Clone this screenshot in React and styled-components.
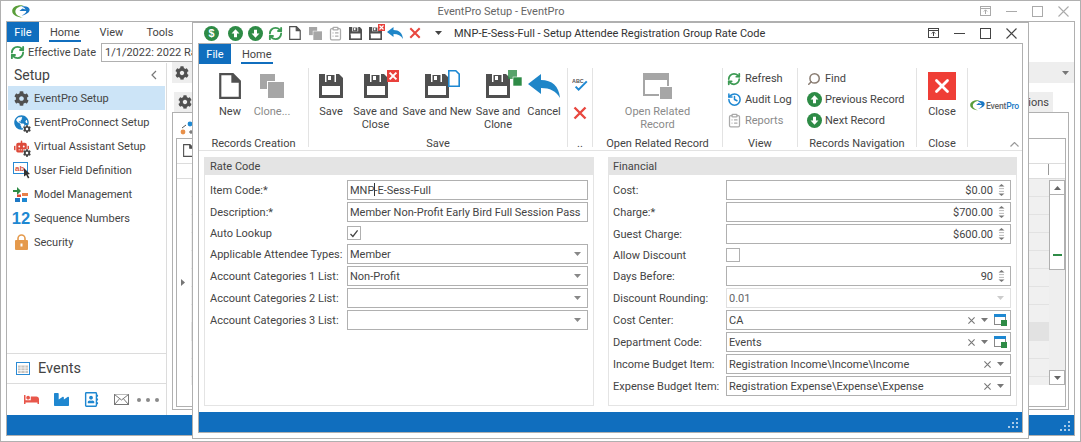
import React from 'react'
import styled, { createGlobalStyle } from 'styled-components'
import { RefreshCw, Search, History, ClipboardList, X } from 'lucide-react'
import { FaCog, FaGlobeAmericas, FaRobot, FaBed, FaIndustry, FaRegAddressBook } from 'react-icons/fa'

const BLUE = '#106ebe'
const LINE = '#b0b0b0'
const TEXT = '#444444'
const FONT = 'Roboto, "Open Sans", sans-serif'

const Global = createGlobalStyle`
  html, body { margin: 0; padding: 0; background: #fff; }
  body { font-family: ${FONT}; font-size: 11px; color: ${TEXT}; }
  * { box-sizing: border-box; }
`

/* ---------- small drawings ---------- */

const Swirl = ({ w = 18, h = 13 }) => (
  <svg width={w} height={h} viewBox="0 0 18 13">
    <path d="M12 .6C6 -.6.4 1.6.2 5.8c-.2 4 5 6.6 10.8 6.8C6 11.6 3 9 3.4 6 3.8 3.2 7.4 1.2 12 .6z" fill="#5a9e3a" />
    <path d="M9 1.6c4-1 8-.2 8.6 2.6.4 2.6-2.6 5.4-8 6.4 3-1.4 4.8-3 4.6-4.6H7.4l3-2.4 3.2 1c-.6-1.6-2.4-2.6-4.6-3z" fill="#1b78c4" />
  </svg>
)

const RoundArrow = ({ down, size = 15 }) => (
  <svg width={size} height={size} viewBox="0 0 16 16">
    <circle cx="8" cy="8" r="8" fill="#2e8b46" />
    <path d={down ? 'M8 12.6 3.8 8H6.4V4h3.2v4h2.6z' : 'M8 3.4 12.2 8H9.6v4H6.4V8H3.8z'} fill="#fff" />
  </svg>
)

const Dollar = () => (
  <svg width="15" height="15" viewBox="0 0 16 16">
    <circle cx="8" cy="8" r="8" fill="#2e8b46" />
    <text x="8" y="12" fontSize="11.5" fontWeight="700" fontFamily="Liberation Sans, sans-serif" textAnchor="middle" fill="#fff">$</text>
  </svg>
)

const DocIcon = ({ size = 26, color = '#505050' }) => (
  <svg width={size * 0.85} height={size} viewBox="0 0 22 26" fill="none">
    <path d="M1.2 1.2h12.6l7 7v16.6H1.2zM13.4 1.4v7.2h7.2" stroke={color} strokeWidth="2.2" />
    <path d="M13.6 1.6l6.8 6.8h-6.8z" fill={color} />
  </svg>
)

const CloneIcon = ({ size = 24 }) => (
  <svg width={size} height={size} viewBox="0 0 24 24">
    <rect x="0" y="0" width="15" height="15" fill="#a6a6a6" />
    <rect x="7" y="7" width="17" height="17" fill="#fff" />
    <rect x="8" y="8" width="16" height="16" fill="#a6a6a6" />
  </svg>
)

const FloppyShape = ({ size = 24 }) => (
  <svg width={size} height={size} viewBox="0 0 24 24">
    <path d="M0 0h20l4 4v20H0z" fill="#4f4f4f" />
    <rect x="6" y="0" width="11" height="8" fill="#fff" />
    <rect x="7.5" y="1" width="8" height="7" fill="#4f4f4f" />
    <rect x="9" y="2" width="3" height="4" fill="#fff" />
    <rect x="3" y="12" width="18" height="9" fill="#fff" />
    <rect x="0" y="15" width="3" height="9" fill="#4f4f4f" />
  </svg>
)

const BadgeBox = styled.span`
  position: relative;
  display: inline-flex;
`

const Badge = styled.span`
  position: absolute;
  right: ${p => p.$r}px;
  top: ${p => p.$t}px;
  display: flex;
`

const RedSquare = ({ size = 12 }) => (
  <svg width={size} height={size} viewBox="0 0 12 12">
    <rect width="12" height="12" fill="#e9413c" />
    <path d="M2.6 2.6l6.8 6.8M9.4 2.6 2.6 9.4" stroke="#fff" strokeWidth="2" />
  </svg>
)

const BlueDoc = () => (
  <svg width="12" height="17" viewBox="0 0 12 17">
    <path d="M.8.8h7l3.4 3.4v12H.8z" fill="#fff" stroke="#1e88d2" strokeWidth="1.6" />
  </svg>
)

const GreenSquares = () => (
  <svg width="14" height="16" viewBox="0 0 14 16">
    <rect width="9" height="9" fill="#2e8b46" opacity=".8" />
    <rect x="5" y="7" width="9" height="9" fill="#2e8b46" stroke="#fff" strokeWidth=".6" />
  </svg>
)

const SaveIcon = ({ kind }) => (
  <BadgeBox>
    <FloppyShape />
    {kind === 'close' && <Badge $r={-11} $t={-4}><RedSquare /></Badge>}
    {kind === 'new' && <Badge $r={-11} $t={-4}><BlueDoc /></Badge>}
    {kind === 'clone' && <Badge $r={-12} $t={-4}><GreenSquares /></Badge>}
  </BadgeBox>
)

const SmallFloppy = ({ badge }) => (
  <BadgeBox>
    <FloppyShape size={13} />
    {badge && <Badge $r={-3} $t={-3}><RedSquare size={7} /></Badge>}
  </BadgeBox>
)

const UndoArrow = ({ w = 32, h = 24 }) => (
  <svg width={w} height={h} viewBox="0 0 32 24">
    <path d="M0 10 13 0v6c11 0 18 6 19 18-4-7-10-10-19-10v6z" fill="#1f86c8" />
  </svg>
)

const RedX = ({ size = 14 }) => (
  <svg width={size} height={size} viewBox="0 0 14 14">
    <path d="M1.5 1.5l11 11M12.5 1.5l-11 11" stroke="#e8473f" strokeWidth="2.4" />
  </svg>
)

const SpellIcon = () => (
  <svg width="16" height="13" viewBox="0 0 16 13">
    <text x="0" y="5" fontSize="5.4" fontWeight="700" fontFamily="Liberation Sans, sans-serif" fill="#555">ABC</text>
    <path d="M3.6 8.6l3 3L14.8 3.4" fill="none" stroke="#1e88d2" strokeWidth="2" />
  </svg>
)

const RelatedIcon = () => (
  <svg width="29" height="26" viewBox="0 0 29 26">
    <rect x="1" y="1" width="24" height="21" fill="#fff" stroke="#a6a6a6" strokeWidth="2" />
    <rect x="0" y="0" width="26" height="7" fill="#a6a6a6" />
    <rect x="16" y="13" width="13" height="13" fill="#fff" />
    <rect x="17" y="14" width="12" height="12" fill="#a6a6a6" />
  </svg>
)

const LookupIcon = () => (
  <svg width="13" height="12" viewBox="0 0 13 12">
    <rect x=".5" y=".5" width="11" height="10" fill="#fff" stroke="#888" />
    <rect width="12" height="3" fill="#1e88d2" />
    <rect x="7" y="6" width="6" height="6" fill="#2e8b46" />
  </svg>
)

const Caretish = ({ color = '#666', dir = 'down' }) => (
  <svg width="7" height="4" viewBox="0 0 7 4">
    <path d={dir === 'down' ? 'M0 0h7L3.5 4z' : 'M0 4h7L3.5 0z'} fill={color} />
  </svg>
)

const Spinner = () => (
  <svg width="7" height="14" viewBox="0 0 7 14" fill="none">
    <path d="M0.5 3.4 3.5 1 6.5 3.4 0.5 3.4z" fill="#777" />
    <path d="M1 5.6h5M1 8.4h5" stroke="#bbb" />
    <path d="M0.5 10.6h6L3.5 13z" fill="#777" />
  </svg>
)

const UserFieldIcon = () => (
  <svg width="17" height="17" viewBox="0 0 17 17">
    <rect x=".5" y=".5" width="14" height="11" fill="#fff" stroke="#2a8ad4" />
    <text x="2" y="9" fontSize="8" fontWeight="700" fontFamily="Liberation Sans, sans-serif" fill="#d9563f">ab</text>
    <path d="M11 6v8.5l2.2-1.6L15 16.4 16.4 15.6 14.6 12.4 17 12z" fill="#333" />
  </svg>
)

const ModelIcon = () => (
  <svg width="16" height="15" viewBox="0 0 16 15">
    <path d="M0 3h4V0l4 4-4 4V5H0z" fill="#2e8b46" />
    <rect x="9" y="6" width="6" height="3" fill="#e8804a" />
    <rect x="4" y="7.5" width="4" height="2.5" fill="#e04a3a" />
    <rect x="2" y="11" width="5" height="4" fill="#1e78c4" />
    <rect x="9" y="11" width="5" height="4" fill="#1e88d2" />
  </svg>
)

const LockIcon = () => (
  <svg width="13" height="16" viewBox="0 0 13 16">
    <path d="M3 7V4.5a3.5 3.5 0 0 1 7 0V7" fill="none" stroke="#e59a4c" strokeWidth="1.6" />
    <rect y="6" width="13" height="10" rx="1" fill="#e59a4c" />
    <rect x="5.5" y="9.5" width="2" height="3" fill="#fff" />
  </svg>
)

const CalendarIcon = () => (
  <svg width="14" height="13" viewBox="0 0 14 13">
    <rect x=".5" y=".5" width="13" height="12" fill="#fff" stroke="#2a8ad4" />
    <rect x="2" y="3.5" width="10" height="7.5" fill="#c9c5c0" />
    <path d="M2 6h10M2 8.5h10M5 3.5v7.5M9 3.5v7.5" stroke="#fff" strokeWidth=".7" />
  </svg>
)

const MailIcon = () => (
  <svg width="15" height="11" viewBox="0 0 15 11" fill="#fff" stroke="#777">
    <rect x=".5" y=".5" width="14" height="10" />
    <path d="M.5.5 7.5 6l7-5.5M.5 10.5 5.5 4.8M14.5 10.5 9.5 4.8" />
  </svg>
)

const Grip = () => (
  <svg width="11" height="11" viewBox="0 0 11 11" fill="#a9cbe8">
    <rect x="8" y="0" width="2" height="2" />
    <rect x="4" y="4" width="2" height="2" />
    <rect x="8" y="4" width="2" height="2" />
    <rect x="0" y="8" width="2" height="2" />
    <rect x="4" y="8" width="2" height="2" />
    <rect x="8" y="8" width="2" height="2" />
  </svg>
)

/* ---------- main window ---------- */

const Window = styled.div`
  position: relative;
  width: 1081px;
  height: 442px;
  overflow: hidden;
  background: #fff;
  border: 1px solid ${LINE};
  display: flex;
  flex-direction: column;
`

const TitleBar = styled.div`
  height: 20px;
  flex: none;
  display: flex;
  align-items: center;
  position: relative;
  padding-left: 11px;
`

const TitleText = styled.div`
  flex: 1;
  text-align: center;
  color: ${p => p.$dim ? '#666' : '#333'};
`

const WinControls = styled.div`
  display: flex;
  align-items: center;
  padding-right: ${p => p.$right}px;
  color: ${p => p.$dim ? '#aaa' : '#444'};
`

const WinButton = styled.span`
  width: 26px;
  height: 20px;
  display: flex;
  align-items: center;
  justify-content: center;
`

const RestoreGlyph = () => (
  <svg width="11" height="10" viewBox="0 0 11 10" fill="none" stroke="currentColor">
    <rect x=".5" y=".5" width="10" height="9" />
    <path d="M.5 2.5h10M5.5 8V4M3.8 5.5l1.7-1.7 1.7 1.7" />
  </svg>
)

const MinGlyph = () => (
  <svg width="11" height="1" viewBox="0 0 11 1"><rect width="11" height="1" fill="currentColor" /></svg>
)

const MaxGlyph = () => (
  <svg width="11" height="11" viewBox="0 0 11 11" fill="none" stroke="currentColor">
    <rect x=".5" y=".5" width="10" height="10" />
  </svg>
)

const CloseGlyph = () => (
  <svg width="11" height="11" viewBox="0 0 11 11" stroke="currentColor" strokeWidth="1.1">
    <path d="M.5.5l10 10M10.5.5l-10 10" />
  </svg>
)

const Controls = ({ dim, right }) => (
  <WinControls $dim={dim} $right={right}>
    <WinButton><RestoreGlyph /></WinButton>
    <WinButton><MinGlyph /></WinButton>
    <WinButton><MaxGlyph /></WinButton>
    <WinButton><CloseGlyph /></WinButton>
  </WinControls>
)

const MainFrame = styled.div`
  flex: 1;
  margin: 0 5px 5px;
  border: 1px solid ${LINE};
  display: flex;
  flex-direction: column;
  min-height: 0;
`

const TabRow = styled.div`
  height: 20px;
  flex: none;
  display: flex;
  align-items: stretch;
`

const FileTab = styled.div`
  width: ${p => p.$w}px;
  background: ${BLUE};
  color: #fff;
  display: flex;
  align-items: center;
  justify-content: center;
`

const MenuTab = styled.div`
  display: flex;
  align-items: center;
  margin-left: ${p => p.$left}px;
  padding: 0 1px;
  position: relative;
  ${p => p.$active && `
    &::after {
      content: '';
      position: absolute;
      left: 0;
      right: 0;
      bottom: 0;
      height: 2px;
      background: ${BLUE};
    }
  `}
`

const ToolRow = styled.div`
  height: 21px;
  flex: none;
  display: flex;
  align-items: center;
  padding-left: 3px;
  gap: 3px;
`

const DateCombo = styled.div`
  width: 300px;
  height: 19px;
  border: 1px solid ${LINE};
  display: flex;
  align-items: center;
  padding-left: 3px;
  margin-left: 2px;
`

const Body = styled.div`
  flex: 1;
  display: flex;
  min-height: 0;
`

const Sidebar = styled.div`
  width: 160px;
  flex: none;
  border-right: 1px solid #dcdcdc;
  display: flex;
  flex-direction: column;
`

const SideHead = styled.div`
  height: 23px;
  display: flex;
  align-items: center;
  justify-content: space-between;
  padding: 0 9px 0 7px;
  font-size: 14px;
  color: #444;
`

const SideList = styled.div`
  flex: 1;
`

const SideRow = styled.div`
  height: 24px;
  margin-left: 1px;
  margin-right: 1px;
  display: flex;
  align-items: center;
  background: ${p => p.$active ? '#cce4f7' : 'transparent'};
`

const SideIcon = styled.span`
  width: 26px;
  flex: none;
  display: flex;
  justify-content: center;
  position: relative;
  color: ${p => p.$color || '#505050'};
  font-size: 15px;
`

const TinyGear = styled.span`
  position: absolute;
  right: 3px;
  bottom: -3px;
  display: flex;
  color: #444;
  font-size: 8px;
  background: #fff;
  border-radius: 50%;
`

const TwelveMark = styled.span`
  font: 700 16.5px "Liberation Sans", sans-serif;
  color: #1e88d2;
  line-height: 1;
`

const EventsRow = styled.div`
  height: 31px;
  flex: none;
  border-top: 1px solid #dcdcdc;
  border-bottom: 1px solid #dcdcdc;
  display: flex;
  align-items: center;
  gap: 8px;
  padding-left: 9px;
  font-size: 14.5px;
`

const ShortcutRow = styled.div`
  flex: none;
  height: 31px;
  display: flex;
  align-items: center;
  padding-left: 16px;
  gap: 14px;
  font-size: 15px;
`

const Shortcut = styled.span`
  width: 16px;
  display: flex;
  justify-content: center;
  color: ${p => p.$color};
`

const Dots = styled.span`
  display: flex;
  gap: 5px;
  margin-left: -6px;
`

const Dot = styled.i`
  width: 4px;
  height: 4px;
  border-radius: 50%;
  background: #8a8a8a;
`

const Workspace = styled.div`
  flex: 1;
  min-width: 0;
  display: flex;
  flex-direction: column;
  padding-left: 5px;
`

const SpaceBar = styled.div`
  height: 21px;
  flex: none;
  margin-top: -1px;
  background: #eee;
  display: flex;
  align-items: center;
  justify-content: space-between;
  padding: 0 5px 0 0;
`

const GearTab = styled.span`
  display: flex;
  align-items: center;
  gap: 4px;
  font-size: 14px;
  color: #505050;
  padding-left: 3px;
`

const SubTabs = styled.div`
  height: 20px;
  margin-top: 9px;
  flex: none;
  display: flex;
  justify-content: space-between;
  padding: 0 21px 0 2px;
`

const SubTab = styled.div`
  background: #eee;
  display: flex;
  align-items: center;
  padding: 0 4px;
  font-size: 14px;
  color: #505050;
`

const OptionTab = styled(SubTab)`
  font-size: 11px;
  color: ${TEXT};
`

const OuterBox = styled.div`
  flex: none;
  height: 298px;
  margin-right: 5px;
  border: 1px solid ${LINE};
  padding: 5px 2px 2px 3px;
  display: flex;
  flex-direction: column;
`

const DotsTab = styled.div`
  height: 20px;
  flex: none;
  display: flex;
  align-items: center;
  padding-left: 3px;
  background: transparent;
`

const InnerBox = styled.div`
  flex: 1;
  border: 1px solid ${LINE};
  display: flex;
  flex-direction: column;
  min-height: 0;
`

const InnerHead = styled.div`
  height: 25px;
  flex: none;
  border-bottom: 1px solid #dcdcdc;
  padding: 5px 0 0 6px;
  background: #fff;
`

const ColumnHead = styled.div`
  height: 15px;
  flex: none;
  border-bottom: 1px solid #dcdcdc;
  display: flex;
  justify-content: flex-end;
  padding-right: 16px;
`

const ColumnTick = styled.i`
  width: 1px;
  height: 11px;
  background: #999;
`

const GridArea = styled.div`
  flex: 1;
  display: flex;
  min-height: 0;
`

const GridLeft = styled.div`
  width: 14px;
  flex: none;
  background: #fff;
  display: flex;
  align-items: center;
  padding: 0 0 20px 4px;
`

const GridRows = styled.div`
  flex: 1;
  background: #f0f0f0;
  height: 206px;
`

const GridRow = styled.div`
  height: 18px;
  border-bottom: 1px solid #e2e2e2;
  background: ${p => p.$on ? '#e2e2e2' : 'transparent'};
`

const ScrollBar = styled.div`
  width: 16px;
  height: 206px;
  background: #eee;
  flex: none;
  display: flex;
  flex-direction: column;
  padding-top: 1px;
`

const ScrollBtn = styled.div`
  height: 15px;
  flex: none;
  background: #fff;
  border: 1px solid ${LINE};
  display: flex;
  align-items: center;
  justify-content: center;
`

const ScrollThumb = styled.div`
  height: 75px;
  flex: none;
  background: #fff;
  border: 1px solid ${LINE};
  border-top: none;
  display: flex;
  align-items: flex-end;
  justify-content: center;
  padding-bottom: 13px;
`

const ThumbMark = styled.i`
  width: 9px;
  height: 2px;
  background: #2e8b46;
`

const ScrollGap = styled.div`
  flex: 1;
`

const StatusBar = styled.div`
  height: 20px;
  flex: none;
  background: ${BLUE};
  display: flex;
  align-items: center;
  justify-content: flex-end;
  padding: 3px 3px 0 0;
`

/* ---------- dialog ---------- */

const Dialog = styled.div`
  position: absolute;
  left: 191px;
  top: 20px;
  width: 837px;
  height: 418px;
  background: #fff;
  border: 1px solid ${LINE};
  border-top-width: 2px;
  display: flex;
  flex-direction: column;
`

const DialogBar = styled.div`
  height: 20px;
  flex: none;
  display: flex;
  align-items: center;
  padding-left: 8px;
`

const Quick = styled.span`
  width: 20px;
  height: 20px;
  flex: none;
  display: flex;
  align-items: center;
  justify-content: center;
  margin: 0 ${p => p.$mr || 0}px 0 ${p => p.$ml || 0}px;
  color: #888;
`

const DialogTitle = styled.div`
  flex: 1;
  margin-left: 6px;
  color: #333;
`

const DialogFrame = styled.div`
  flex: 1;
  margin: 0 5px 5px;
  border: 1px solid ${LINE};
  display: flex;
  flex-direction: column;
  min-height: 0;
`

const Ribbon = styled.div`
  height: 87px;
  flex: none;
  border-bottom: 1px solid #e3e3e3;
  padding-top: 4px;
  display: flex;
`

const Group = styled.div`
  width: ${p => p.$w}px;
  flex: ${p => p.$w ? 'none' : 1};
  height: 79px;
  border-right: ${p => p.$last ? 'none' : '1px solid #e3e3e3'};
  display: flex;
  flex-direction: column;
`

const GroupBody = styled.div`
  flex: 1;
  display: flex;
  padding-left: ${p => p.$left || 0}px;
  justify-content: ${p => p.$center ? 'center' : 'flex-start'};
`

const GroupLabel = styled.div`
  height: 16px;
  line-height: 16px;
  margin-bottom: -5px;
  text-align: center;
  white-space: nowrap;
  flex: none;
`

const BigButton = styled.div`
  width: ${p => p.$w}px;
  flex: none;
  padding-top: 2px;
  display: flex;
  flex-direction: column;
  align-items: center;
  color: ${p => p.$off ? '#8a8a8a' : TEXT};
`

const BigIcon = styled.div`
  height: 31px;
  display: flex;
  align-items: center;
  justify-content: center;
`

const BigText = styled.div`
  margin-top: 4px;
  line-height: 13px;
  text-align: center;
  white-space: nowrap;
`

const SmallList = styled.div`
  display: flex;
  flex-direction: column;
`

const SmallButton = styled.div`
  height: 21px;
  display: flex;
  align-items: center;
  gap: 3px;
  color: ${p => p.$off ? '#8a8a8a' : TEXT};
  white-space: nowrap;
`

const SmallIcon = styled.span`
  width: 16px;
  height: 16px;
  display: flex;
  align-items: center;
  justify-content: center;
  color: ${p => p.$color};
`

const SpellStack = styled.div`
  width: 100%;
  display: flex;
  flex-direction: column;
  align-items: center;
  gap: 15px;
  padding-top: 10px;
`

const RedBox = styled.div`
  width: 28px;
  height: 28px;
  background: #ef3e36;
  display: flex;
  align-items: center;
  justify-content: center;
`

const LogoColumn = styled.div`
  flex: 1;
  display: flex;
  flex-direction: column;
  padding: 32px 3px 0 2px;
`

const LogoMark = styled.div`
  display: flex;
  align-items: center;
  gap: 1px;
  font-size: 8.6px;
  font-weight: 500;
  letter-spacing: -0.2px;
  color: #666;
  white-space: nowrap;
`

const LogoPro = styled.span`
  color: #1b78c4;
`

const Collapse = styled.div`
  margin-top: auto;
  align-self: flex-end;
  display: flex;
  color: #999;
`

const Content = styled.div`
  flex: 1;
  min-height: 0;
  padding: 6px 5px;
  display: grid;
  grid-template-columns: 390px 409px;
  column-gap: 14px;
`

const Panel = styled.div`
  border: 1px solid #e4e4e4;
  border-top: none;
  display: flex;
  flex-direction: column;
`

const PanelHead = styled.div`
  height: 18px;
  flex: none;
  background: #e4e4e4;
  display: flex;
  align-items: center;
  padding-left: ${p => p.$pad}px;
`

const Form = styled.div`
  display: flex;
  flex-direction: column;
  gap: 2px;
  padding: 5px ${p => p.$right}px 0 ${p => p.$left}px;
`

const Row = styled.div`
  height: ${p => p.$short ? 18 : 20}px;
  display: grid;
  grid-template-columns: ${p => p.$label}px 1fr;
  align-items: center;
`

const Label = styled.div`
  white-space: nowrap;
`

const Field = styled.div`
  height: 20px;
  border: 1px solid ${p => p.$off ? '#e0e0e0' : LINE};
  display: flex;
  align-items: center;
  padding: 0 3px 0 2px;
  min-width: 0;
  color: ${p => p.$off ? '#666' : TEXT};
`

const FieldText = styled.span`
  flex: 1;
  white-space: nowrap;
  overflow: hidden;
  text-align: ${p => p.$right ? 'right' : 'left'};
  padding-right: ${p => p.$right ? 5 : 0}px;
`

const TextCaret = styled.i`
  display: inline-block;
  width: 1px;
  height: 13px;
  background: #333;
  vertical-align: -2px;
  margin-right: -1px;
`

const FieldBits = styled.span`
  display: flex;
  align-items: center;
  gap: 6px;
  flex: none;
  padding-right: ${p => p.$pad || 0}px;
`

const ClearMark = styled.span`
  display: flex;
  color: #777;
`

const Check = styled.div`
  width: 14px;
  height: 14px;
  border: 1px solid ${LINE};
  display: flex;
  align-items: center;
  justify-content: center;
`

const ClearX = () => (
  <ClearMark>
    <svg width="7" height="7" viewBox="0 0 7 7" stroke="currentColor" strokeWidth="1.1">
      <path d="M.4.4l6.2 6.2M6.6.4.4 6.6" />
    </svg>
  </ClearMark>
)

/* ---------- data ---------- */

const sideItems = [
  { label: 'EventPro Setup', active: true, icon: <FaCog /> },
  { label: 'EventProConnect Setup', color: '#1b7fc4', icon: <FaGlobeAmericas />, gear: true },
  { label: 'Virtual Assistant Setup', color: '#dd4a3a', icon: <FaRobot />, gear: true },
  { label: 'User Field Definition', icon: <UserFieldIcon /> },
  { label: 'Model Management', icon: <ModelIcon /> },
  { label: 'Sequence Numbers', icon: <TwelveMark>12</TwelveMark> },
  { label: 'Security', icon: <LockIcon /> },
]

const rateRows = [
  { label: 'Item Code:*', value: <>MNP<TextCaret />-E-Sess-Full</> },
  { label: 'Description:*', value: 'Member Non-Profit Early Bird Full Session Pass' },
  { label: 'Auto Lookup', check: true },
  { label: 'Applicable Attendee Types:', value: 'Member', list: true },
  { label: 'Account Categories 1 List:', value: 'Non-Profit', list: true },
  { label: 'Account Categories 2 List:', value: '', list: true },
  { label: 'Account Categories 3 List:', value: '', list: true },
]

const moneyRows = [
  { label: 'Cost:', value: '$0.00', spin: true },
  { label: 'Charge:*', value: '$700.00', spin: true },
  { label: 'Guest Charge:', value: '$600.00', spin: true },
  { label: 'Allow Discount', check: false },
  { label: 'Days Before:', value: '90', spin: true },
  { label: 'Discount Rounding:', value: '0.01', off: true },
  { label: 'Cost Center:', value: 'CA', lookup: true },
  { label: 'Department Code:', value: 'Events', lookup: true },
  { label: 'Income Budget Item:', value: 'Registration Income\\Income\\Income', clear: true },
  { label: 'Expense Budget Item:', value: 'Registration Expense\\Expense\\Expense', clear: true },
]

const FormRow = ({ row, labelWidth }) => {
  if ('check' in row) {
    return (
      <Row $short $label={labelWidth}>
        <Label>{row.label}</Label>
        <Check>
          {row.check && (
            <svg width="10" height="9" viewBox="0 0 10 9" fill="none" stroke="#444" strokeWidth="1.3">
              <path d="M1.5 5l2.4 2.4L8.6 1.4" />
            </svg>
          )}
        </Check>
      </Row>
    )
  }
  return (
    <Row $label={labelWidth}>
      <Label>{row.label}</Label>
      <Field $off={row.off}>
        <FieldText $right={row.spin}>{row.value}</FieldText>
        {row.spin && <FieldBits $pad={2}><Spinner /></FieldBits>}
        {(row.list || row.off) && <FieldBits $pad={3}><Caretish color={row.off ? '#ccc' : '#888'} /></FieldBits>}
        {row.clear && <FieldBits $pad={3}><ClearX /><Caretish color="#777" /></FieldBits>}
        {row.lookup && <FieldBits><ClearX /><Caretish color="#777" /><LookupIcon /></FieldBits>}
      </Field>
    </Row>
  )
}

const App = () => {
  return (
    <>
      <Global />
      <Window>
        <TitleBar>
          <Swirl />
          <TitleText $dim>EventPro Setup - EventPro</TitleText>
          <Controls dim right={4} />
        </TitleBar>
        <MainFrame>
          <TabRow>
            <FileTab $w={32}>File</FileTab>
            <MenuTab $left={10} $active>Home</MenuTab>
            <MenuTab $left={18}>View</MenuTab>
            <MenuTab $left={21}>Tools</MenuTab>
          </TabRow>
          <ToolRow>
            <RefreshCw size={15} color="#3c9a53" strokeWidth={3} />
            Effective Date
            <DateCombo>1/1/2022: 2022 Rates</DateCombo>
          </ToolRow>
          <Body>
            <Sidebar>
              <SideHead>
                Setup
                <svg width="6" height="10" viewBox="0 0 6 10" fill="none" stroke="#777" strokeWidth="1.2">
                  <path d="M5 1 1 5l4 4" />
                </svg>
              </SideHead>
              <SideList>
                {sideItems.map(item => (
                  <SideRow key={item.label} $active={item.active}>
                    <SideIcon $color={item.color}>
                      {item.icon}
                      {item.gear && <TinyGear><FaCog /></TinyGear>}
                    </SideIcon>
                    {item.label}
                  </SideRow>
                ))}
              </SideList>
              <EventsRow><CalendarIcon />Events</EventsRow>
              <ShortcutRow>
                <Shortcut $color="#e8574b"><FaBed /></Shortcut>
                <Shortcut $color="#1f87d0"><FaIndustry /></Shortcut>
                <Shortcut $color="#1f87d0"><FaRegAddressBook /></Shortcut>
                <Shortcut><MailIcon /></Shortcut>
                <Dots><Dot /><Dot /><Dot /></Dots>
              </ShortcutRow>
            </Sidebar>
            <Workspace>
              <SpaceBar>
                <GearTab><FaCog /></GearTab>
                <Caretish color="#777" />
              </SpaceBar>
              <SubTabs>
                <SubTab><FaCog /></SubTab>
                <OptionTab>Options</OptionTab>
              </SubTabs>
              <OuterBox>
                <DotsTab>
                  <svg width="15" height="14" viewBox="0 0 15 14">
                    <circle cx="11" cy="3" r="2.4" fill="#1e88d2" />
                    <circle cx="4" cy="11" r="2.4" fill="#e8904a" />
                    <path d="M3 7l4-3M10 11h4M12 9v4" stroke="#555" fill="none" />
                  </svg>
                </DotsTab>
                <InnerBox>
                  <InnerHead><DocIcon size={13} /></InnerHead>
                  <ColumnHead><ColumnTick /></ColumnHead>
                  <GridArea>
                    <GridLeft>
                      <svg width="4" height="7" viewBox="0 0 4 7"><path d="M0 0v7l4-3.5z" fill="#777" /></svg>
                    </GridLeft>
                    <GridRows>
                      {Array.from({ length: 11 }, (_, i) => <GridRow key={i} $on={i === 8} />)}
                    </GridRows>
                    <ScrollBar>
                      <ScrollBtn><Caretish dir="up" /></ScrollBtn>
                      <ScrollThumb><ThumbMark /></ScrollThumb>
                      <ScrollGap />
                      <ScrollBtn><Caretish /></ScrollBtn>
                    </ScrollBar>
                  </GridArea>
                </InnerBox>
              </OuterBox>
            </Workspace>
          </Body>
          <StatusBar><Grip /></StatusBar>
        </MainFrame>

        <Dialog>
          <DialogBar>
            <Quick $mr={4}><Dollar /></Quick>
            <Quick><RoundArrow /></Quick>
            <Quick><RoundArrow down /></Quick>
            <Quick><RefreshCw size={15} color="#3c9a53" strokeWidth={3} /></Quick>
            <Quick><DocIcon size={14} /></Quick>
            <Quick><CloneIcon size={13} /></Quick>
            <Quick><ClipboardList size={15} color="#aaa" strokeWidth={2} /></Quick>
            <Quick><SmallFloppy /></Quick>
            <Quick><SmallFloppy badge /></Quick>
            <Quick><UndoArrow w={16} h={12} /></Quick>
            <Quick><RedX size={12} /></Quick>
            <Quick $ml={3}><Caretish color="#444" /></Quick>
            <DialogTitle>MNP-E-Sess-Full - Setup Attendee Registration Group Rate Code</DialogTitle>
            <Controls right={4} />
          </DialogBar>
          <DialogFrame>
            <TabRow>
              <FileTab $w={32}>File</FileTab>
              <MenuTab $left={10} $active>Home</MenuTab>
            </TabRow>
            <Ribbon>
              <Group $w={110}>
                <GroupBody $left={11}>
                  <BigButton $w={40}><BigIcon><DocIcon /></BigIcon><BigText>New</BigText></BigButton>
                  <BigButton $w={44} $off><BigIcon><CloneIcon /></BigIcon><BigText>Clone...</BigText></BigButton>
                </GroupBody>
                <GroupLabel>Records Creation</GroupLabel>
              </Group>
              <Group $w={259}>
                <GroupBody>
                  <BigButton $w={44}><BigIcon><SaveIcon /></BigIcon><BigText>Save</BigText></BigButton>
                  <BigButton $w={45}><BigIcon><SaveIcon kind="close" /></BigIcon><BigText>Save and<br />Close</BigText></BigButton>
                  <BigButton $w={78}><BigIcon><SaveIcon kind="new" /></BigIcon><BigText>Save and New</BigText></BigButton>
                  <BigButton $w={44}><BigIcon><SaveIcon kind="clone" /></BigIcon><BigText>Save and<br />Clone</BigText></BigButton>
                  <BigButton $w={48}><BigIcon><UndoArrow /></BigIcon><BigText>Cancel</BigText></BigButton>
                </GroupBody>
                <GroupLabel>Save</GroupLabel>
              </Group>
              <Group $w={25}>
                <GroupBody>
                  <SpellStack><SpellIcon /><RedX /></SpellStack>
                </GroupBody>
                <GroupLabel>..</GroupLabel>
              </Group>
              <Group $w={130}>
                <GroupBody $center>
                  <BigButton $w={90} $off><BigIcon><RelatedIcon /></BigIcon><BigText>Open Related<br />Record</BigText></BigButton>
                </GroupBody>
                <GroupLabel>Open Related Record</GroupLabel>
              </Group>
              <Group $w={75}>
                <GroupBody $left={3}>
                  <SmallList>
                    <SmallButton><SmallIcon><RefreshCw size={14} color="#3c9a53" strokeWidth={3} /></SmallIcon>Refresh</SmallButton>
                    <SmallButton><SmallIcon><History size={15} color="#1e88d2" strokeWidth={2.4} /></SmallIcon>Audit Log</SmallButton>
                    <SmallButton $off><SmallIcon><ClipboardList size={15} color="#aaa" strokeWidth={2} /></SmallIcon>Reports</SmallButton>
                  </SmallList>
                </GroupBody>
                <GroupLabel>View</GroupLabel>
              </Group>
              <Group $w={119}>
                <GroupBody $left={8}>
                  <SmallList>
                    <SmallButton><SmallIcon><Search size={14} color="#8a7d73" strokeWidth={2.6} style={{ transform: 'scaleX(-1)' }} /></SmallIcon>Find</SmallButton>
                    <SmallButton><SmallIcon><RoundArrow /></SmallIcon>Previous Record</SmallButton>
                    <SmallButton><SmallIcon><RoundArrow down /></SmallIcon>Next Record</SmallButton>
                  </SmallList>
                </GroupBody>
                <GroupLabel>Records Navigation</GroupLabel>
              </Group>
              <Group $w={51}>
                <GroupBody $center>
                  <BigButton $w={50}>
                    <BigIcon><RedBox><X size={22} color="#fff" strokeWidth={3} /></RedBox></BigIcon>
                    <BigText>Close</BigText>
                  </BigButton>
                </GroupBody>
                <GroupLabel>Close</GroupLabel>
              </Group>
              <Group $last>
                <LogoColumn>
                  <LogoMark><Swirl w={15} h={11} /><span>Event<LogoPro>Pro</LogoPro></span></LogoMark>
                  <Collapse>
                    <svg width="9" height="5" viewBox="0 0 9 5" fill="none" stroke="#999" strokeWidth="1.2">
                      <path d="M.5 4.5l4-4 4 4" />
                    </svg>
                  </Collapse>
                </LogoColumn>
              </Group>
            </Ribbon>
            <Content>
              <Panel>
                <PanelHead $pad={5}>Rate Code</PanelHead>
                <Form $left={5} $right={5}>
                  {rateRows.map(row => <FormRow key={row.label} row={row} labelWidth={137} />)}
                </Form>
              </Panel>
              <Panel>
                <PanelHead $pad={4}>Financial</PanelHead>
                <Form $left={4} $right={5}>
                  {moneyRows.map(row => <FormRow key={row.label} row={row} labelWidth={113} />)}
                </Form>
              </Panel>
            </Content>
            <StatusBar><Grip /></StatusBar>
          </DialogFrame>
        </Dialog>
      </Window>
    </>
  )
}

export default App
